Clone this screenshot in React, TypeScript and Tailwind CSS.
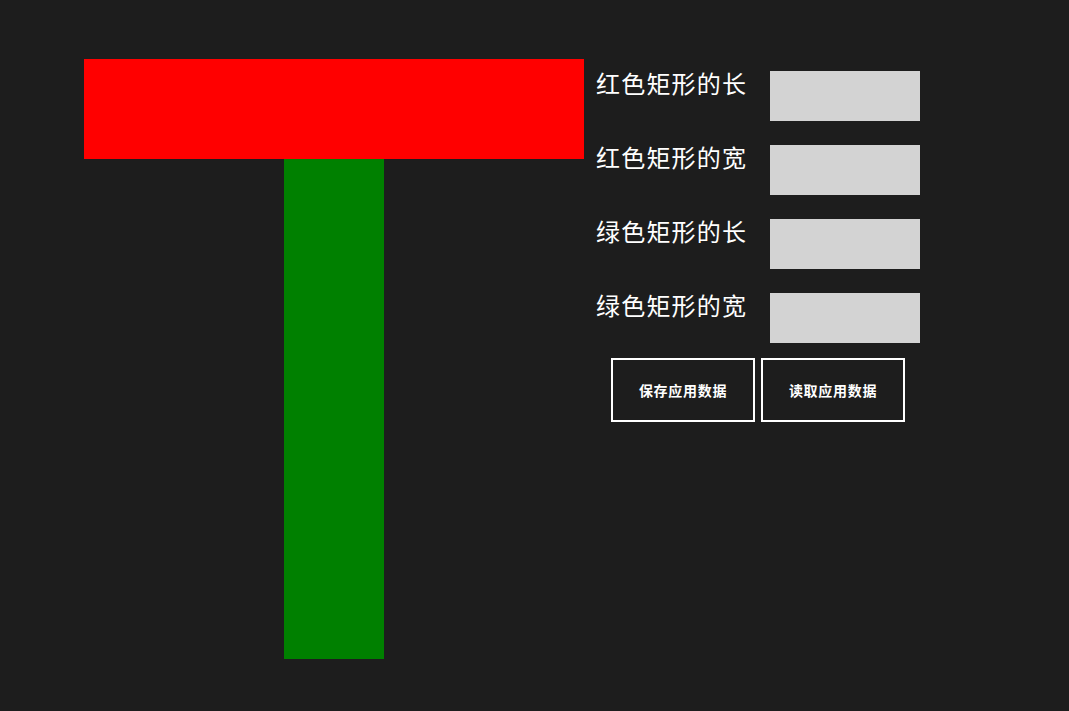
const rows = ['红色矩形的长', '红色矩形的宽', '绿色矩形的长', '绿色矩形的宽']

function Shape() {
  return (
    <div className="flex w-[500px] flex-col items-center">
      <div className="h-[100px] w-[500px] bg-[#ff0000]" />
      <div className="h-[500px] w-[100px] bg-[#008000]" />
    </div>
  )
}

export default function App() {
  return (
    <main
      className="h-[711px] w-full overflow-hidden bg-[#1d1d1d] text-white"
      style={{ fontFamily: '"Noto Sans CJK SC", "Noto Sans", sans-serif' }}
    >
      <div className="flex pl-[84px] pt-[59px]">
        <Shape />
        <div className="ml-[12px] mt-[12px] flex flex-col gap-[24px]">
          {rows.map((label) => (
            <div key={label} className="flex items-start">
              <span className="mt-[-3px] w-[174px] text-[24px] leading-[30px] tracking-[1.2px]">{label}</span>
              <input className="h-[50px] w-[150px] bg-[#d3d3d3] outline-none" />
            </div>
          ))}
          <div className="ml-[15px] mt-[-9px] flex gap-[6px]">
            <button className="h-[64px] w-[144px] border-2 border-white text-[14px] font-bold tracking-[0.7px]">保存应用数据</button>
            <button className="h-[64px] w-[144px] border-2 border-white text-[14px] font-bold tracking-[0.7px]">读取应用数据</button>
          </div>
        </div>
      </div>
    </main>
  )
}
